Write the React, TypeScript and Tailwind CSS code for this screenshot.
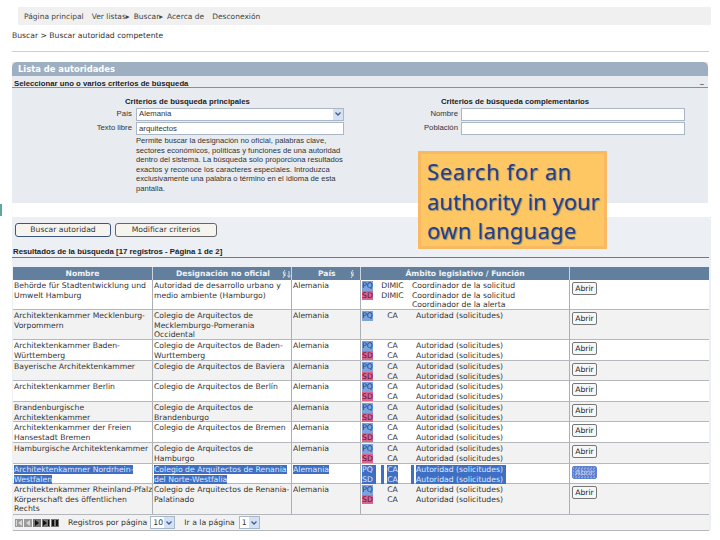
const verdana = "font-['DejaVu_Sans',sans-serif]";

type Line = { tag?: "PQ" | "SD"; code?: string; fn: string };
type Row = { h: string; nombre: string[]; desig: string[]; lines: Line[]; selected?: boolean };

const ca: Line[] = [
  { tag: "PQ", code: "CA", fn: "Autoridad (solicitudes)" },
  { tag: "SD", code: "CA", fn: "Autoridad (solicitudes)" },
];

const rows: Row[] = [
  {
    h: "h-[30px]",
    nombre: ["Behörde für Stadtentwicklung und", "Umwelt Hamburg"],
    desig: ["Autoridad de desarrollo urbano y", "medio ambiente (Hamburgo)"],
    lines: [
      { tag: "PQ", code: "DIMIC", fn: "Coordinador de la solicitud" },
      { tag: "SD", code: "DIMIC", fn: "Coordinador de la solicitud" },
      { fn: "Coordinador de la alerta" },
    ],
  },
  {
    h: "h-[30px]",
    nombre: ["Architektenkammer Mecklenburg-", "Vorpommern"],
    desig: ["Colegio de Arquitectos de", "Mecklemburgo-Pomerania", "Occidental"],
    lines: [{ tag: "PQ", code: "CA", fn: "Autoridad (solicitudes)" }],
  },
  {
    h: "h-[21px]",
    nombre: ["Architektenkammer Baden-", "Württemberg"],
    desig: ["Colegio de Arquitectos de Baden-", "Wurttemberg"],
    lines: ca,
  },
  { h: "h-[20px]", nombre: ["Bayerische Architektenkammer"], desig: ["Colegio de Arquitectos de Baviera"], lines: ca },
  { h: "h-[21px]", nombre: ["Architektenkammer Berlin"], desig: ["Colegio de Arquitectos de Berlín"], lines: ca },
  {
    h: "h-[20px]",
    nombre: ["Brandenburgische", "Architektenkammer"],
    desig: ["Colegio de Arquitectos de", "Brandenburgo"],
    lines: ca,
  },
  {
    h: "h-[21px]",
    nombre: ["Architektenkammer der Freien", "Hansestadt Bremen"],
    desig: ["Colegio de Arquitectos de Bremen"],
    lines: ca,
  },
  {
    h: "h-[21px]",
    nombre: ["Hamburgische Architektenkammer"],
    desig: ["Colegio de Arquitectos de", "Hamburgo"],
    lines: ca,
  },
  {
    h: "h-[20px]",
    nombre: ["Architektenkammer Nordrhein-", "Westfalen"],
    desig: ["Colegio de Arquitectos de Renania", "del Norte-Westfalia"],
    lines: ca,
    selected: true,
  },
  {
    h: "h-[31px]",
    nombre: ["Architektenkammer Rheinland-Pfalz", "Körperschaft des öffentlichen", "Rechts"],
    desig: ["Colegio de Arquitectos de Renania-", "Palatinado"],
    lines: ca,
  },
];

function Texts({ lines, selected }: { lines: string[]; selected?: boolean }) {
  return (
    <>
      {lines.map((t) => (
        <div key={t} className="whitespace-nowrap">
          <span className={selected ? "bg-[#3f6fc4] text-[#dfe8f8]" : ""}>{t}</span>
        </div>
      ))}
    </>
  );
}

function SortIcon({ arrow }: { arrow?: boolean }) {
  return (
    <svg width="10" height="10" viewBox="0 0 10 10" className="shrink-0" fill="none" stroke="#d5dde6" strokeWidth="1">
      <path d="M4 1 L2 4 L4 6 L2 9 M2 4 H5 M2 6 H5" />
      {arrow && <path d="M8 2 V8 M6.5 6.5 L8 8.5 L9.5 6.5" />}
    </svg>
  );
}

function AmbitLines({ lines, selected }: { lines: Line[]; selected?: boolean }) {
  return (
    <>
      {lines.map((l, i) => (
        <div key={i} className="flex h-[9.6px] items-center whitespace-nowrap">
          <span
            className={
              "shrink-0 text-center " +
              (selected
                ? "w-[14px] bg-[#3f6fc4] text-left text-[#dfe8f8]"
                : l.tag === "PQ"
                  ? "w-[11px] bg-[#7da2dc] text-[#1d3f80]"
                  : l.tag === "SD"
                    ? "w-[11px] bg-[#d9658f] text-[#5e1030]"
                    : "w-[11px]")
            }
          >
            {l.tag}
          </span>
          {selected ? (
            <>
              <span className="ml-[5px] h-full w-[3px] bg-[#3f6fc4]" />
              <span className="ml-[3px] w-[11px] bg-[#3f6fc4] text-center text-[#dfe8f8]">{l.code}</span>
              <span className="ml-[13px] h-full w-[3px] bg-[#3f6fc4]" />
              <span className="ml-[2px] bg-[#3f6fc4] pr-[3px] text-[#dfe8f8]">{l.fn}</span>
            </>
          ) : (
            <>
              <span className="w-[39px] shrink-0 text-center">{l.code}</span>
              <span className={l.code === "DIMIC" || !l.code ? "" : "pl-[4px]"}>{l.fn}</span>
            </>
          )}
        </div>
      ))}
    </>
  );
}

function TableRow({ row, index }: { row: Row; index: number }) {
  const cell = "border-r border-[#aab0b6] pl-[1px] pt-[1px]";
  return (
    <div
      className={
        "grid grid-cols-[140px_139px_69px_209px_1fr] border-b border-[#b4b8bc] " +
        row.h +
        (index % 2 ? " bg-[#f2f2f2]" : " bg-white")
      }
    >
      <div className={cell}>
        <Texts lines={row.nombre} selected={row.selected} />
      </div>
      <div className={cell}>
        <Texts lines={row.desig} selected={row.selected} />
      </div>
      <div className={cell}>
        <Texts lines={["Alemania"]} selected={row.selected} />
      </div>
      <div className={cell}>
        <AmbitLines lines={row.lines} selected={row.selected} />
      </div>
      <div className="pl-[2px] pt-[2px]">
        <div
          className={
            "flex h-[13px] w-[25px] items-center justify-center rounded-[2px] border " +
            (row.selected
              ? "border-[#5f83d0] bg-[repeating-conic-gradient(#5a7fce_0_25%,#8aa3de_0_50%)] bg-[length:3px_3px] text-[#c3cfea]"
              : "border-[#777] bg-[#f7f7f7] text-[#222]")
          }
        >
          Abrir
        </div>
      </div>
    </div>
  );
}

function FakeSelect({ value, w }: { value: string; w: string }) {
  return (
    <div className={"flex h-[13px] items-center justify-between border border-[#a9b7c6] bg-white pl-[2px] " + w}>
      <span>{value}</span>
      <span className="flex h-full w-[10px] items-center justify-center bg-[#d5e0f2]">
        <svg width="6" height="4" viewBox="0 0 6 4" fill="none" stroke="#3d5f94" strokeWidth="1.3">
          <path d="M0.5 0.5 L3 3 L5.5 0.5" />
        </svg>
      </span>
    </div>
  );
}

function PagerIcon({ d, dim }: { d: string; dim?: boolean }) {
  return (
    <svg width="8" height="8" viewBox="0 0 8 8" className={dim ? "bg-[#9b9b9b]" : "bg-[#777]"}>
      <path d={d} fill={dim ? "#d8d8d8" : "#111"} />
    </svg>
  );
}

export default function App() {
  return (
    <div className="relative h-[540px] w-[720px] overflow-hidden bg-white text-[#333]">
      {/* top menu */}
      <div className="pl-[18px] pr-[9px] pt-[7px]">
        <div className={"flex h-[18px] items-center bg-[#f0f0f0] pl-[6px] pt-[1px] text-[7.5px] text-[#444] " + verdana}>
          <span>Página principal</span>
          <span className="ml-[8px]">Ver listas▸</span>
          <span className="ml-[4px]">Buscar▸</span>
          <span className="ml-[4px]">Acerca de</span>
          <span className="ml-[8px]">Desconexión</span>
        </div>
      </div>
      <div className={"ml-[12px] mr-[11px] mt-[6px] h-[21px] border-b border-[#cfcfcf] text-[7.65px] leading-[10px] text-[#333] " + verdana}>
        Buscar &gt; Buscar autoridad competente
      </div>

      {/* search panel */}
      <div className="ml-[12px] mr-[12px] mt-[10px] h-[141px] bg-[#e8ecf1]">
        <div className={"h-[14px] rounded-t-[5px] bg-[#9dafc0] pl-[6px] text-[8.4px] font-bold leading-[15px] text-white " + verdana}>
          Lista de autoridades
        </div>
        <div className="flex h-[12px] items-center justify-between border-b border-[#8a8f96] pl-[2px] pr-[4px] pt-[3px] font-['Liberation_Sans',sans-serif] text-[7.75px] font-bold leading-[9px] text-[#222]">
          <span>Seleccionar uno o varios criterios de búsqueda</span>
          <span className="text-[#555]">–</span>
        </div>
        <div className="flex pt-[9px] font-['Liberation_Sans',sans-serif] text-[7.75px] leading-[9.6px] text-[#333]">
          <div className="w-[332px] shrink-0">
            <div className="h-[10px] pl-[113px] font-bold text-[#222]">Criterios de búsqueda principales</div>
            <div className="flex h-[14px] items-center">
              <span className="w-[121px] pr-[1px] text-right">País</span>
              <span className="ml-[3px]">
                <FakeSelect value="Alemania" w="w-[208px]" />
              </span>
            </div>
            <div className="flex h-[14px] items-center">
              <span className="w-[121px] pr-[1px] text-right">Texto libre</span>
              <div className="ml-[3px] h-[13px] w-[208px] border border-[#a9b7c6] bg-white pl-[2px] leading-[11px]">arquitectos</div>
            </div>
            <div className="ml-[124px] whitespace-nowrap pt-[1px] text-[7.65px] leading-[9.5px]">
              Permite buscar la designación no oficial, palabras clave,
              <br />
              sectores económicos, políticas y funciones de una autoridad
              <br />
              dentro del sistema. La búsqueda solo proporciona resultados
              <br />
              exactos y reconoce los caracteres especiales. Introduzca
              <br />
              exclusivamente una palabra o término en el idioma de esta
              <br />
              pantalla.
            </div>
          </div>
          <div className="flex-1">
            <div className="h-[10px] pl-[97px] font-bold text-[#222]">Criterios de búsqueda complementarios</div>
            <div className="flex h-[14px] items-center">
              <span className="w-[115px] pr-[1px] text-right">Nombre</span>
              <div className="ml-[2px] h-[13px] w-[224px] border border-[#a9b7c6] bg-white" />
            </div>
            <div className="flex h-[14px] items-center">
              <span className="w-[115px] pr-[1px] text-right">Población</span>
              <div className="ml-[2px] h-[13px] w-[224px] border border-[#a9b7c6] bg-white" />
            </div>
          </div>
        </div>
      </div>

      <div className="relative h-[14px]">
        <div className="absolute left-0 top-[1px] h-[12px] w-[2px] bg-[#5fa8a0]" />
      </div>

      {/* results */}
      <div className="ml-[12px] mr-[9px] h-[314px] bg-[#eceff3]">
        <div className={"flex gap-[4px] pl-[3px] pt-[6px] text-[7.65px] text-[#333] " + verdana}>
          <div className="flex h-[14px] w-[96px] items-center justify-center rounded-[3px] border border-[#3d5480] bg-[#f6f4ee]">
            Buscar autoridad
          </div>
          <div className="flex h-[14px] w-[102px] items-center justify-center rounded-[3px] border border-[#666] bg-[#f6f4ee]">
            Modificar criterios
          </div>
        </div>
        <div className="mr-[2px] mt-[10px] h-[11px] border-b border-[#777] pl-[1px] font-['Liberation_Sans',sans-serif] text-[7.8px] font-bold leading-[9px] text-[#222]">
          Resultados de la búsqueda [17 registros - Página 1 de 2]
        </div>

        <div className={"ml-[1px] mr-[2px] mt-[9px] text-[7.7px] leading-[9.6px] text-[#333] " + verdana}>
          <div className="grid h-[13px] grid-cols-[140px_139px_69px_209px_1fr] bg-[#62809e] text-[7.6px] font-bold leading-[13px] text-[#f0f3f6]">
            <div className="border-r border-[#cbd3dc] text-center">Nombre</div>
            <div className="flex items-center justify-between border-r border-[#cbd3dc] pl-[23px]">
              <span>Designación no oficial</span>
              <SortIcon arrow />
            </div>
            <div className="flex items-center justify-between border-r border-[#cbd3dc] pl-[26px] pr-[1px]">
              <span>País</span>
              <SortIcon />
            </div>
            <div className="border-r border-[#cbd3dc] text-center">Ámbito legislativo / Función</div>
            <div />
          </div>
          {rows.map((row, i) => (
            <TableRow key={row.nombre[0]} row={row} index={i} />
          ))}
          <div className="flex h-[16px] items-center border-b border-[#b4b8bc] bg-[#f2f2f2] pl-[2px]">
            <div className="flex gap-[1px]">
              <PagerIcon dim d="M1 1H2V7H1ZM7 1V7L3 4Z" />
              <PagerIcon dim d="M6 1V7L2 4Z" />
              <PagerIcon d="M2 1V7L6 4Z" />
              <PagerIcon d="M1 1V7L5 4ZM6 1H7V7H6Z" />
              <PagerIcon d="M1 1H3V7H1ZM5 1H7V7H5Z" />
            </div>
            <span className="ml-[9px]">Registros por página</span>
            <span className="ml-[3px]">
              <FakeSelect value="10" w="w-[25px]" />
            </span>
            <span className="ml-[9px]">Ir a la página</span>
            <span className="ml-[4px]">
              <FakeSelect value="1" w="w-[21px]" />
            </span>
          </div>
        </div>
      </div>

      {/* callout */}
      <div className="absolute left-[418px] top-[151px] h-[98px] w-[189px] whitespace-nowrap border-[3px] border-[#f8b962] bg-[#fec763] pl-[6px] pt-[3px] font-['Noto_Sans',sans-serif] text-[22px] leading-[29.5px] text-[#1f3f8c] [text-shadow:1px_1px_1px_#8a8a70]">
        <span className="tracking-[0.6px]">Search for an</span>
        <br />
        <span>authority in your</span>
        <br />
        <span className="tracking-[0.25px]">own language</span>
      </div>
    </div>
  );
}
